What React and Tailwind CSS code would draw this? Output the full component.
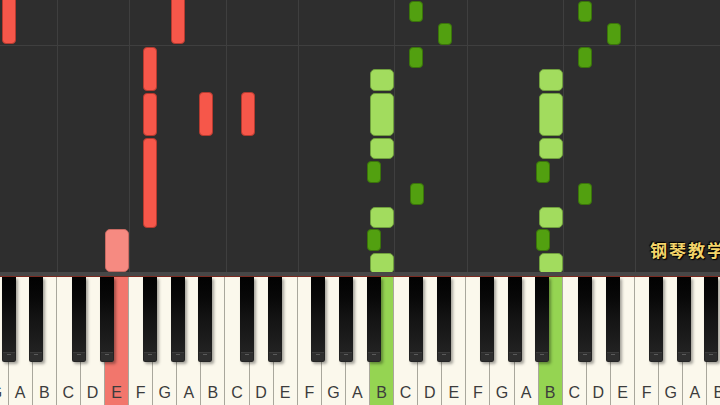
import React from 'react';

const KEY_W = 24.1;
const KEY_O = 8.6;
const LETTERS = ['A', 'B', 'C', 'D', 'E', 'F', 'G'];
const BLACK_SHIFT = { C: -2.4, D: 1.7, F: -3.7, G: 0.2, A: 3.6 };

const edge = (k) => KEY_O + k * KEY_W;
const letterOf = (k) => LETTERS[((k % 7) + 7) % 7];

const keyColors = {
    4: 'bg-[#f2766c]',
    15: 'bg-[#95d452]',
    22: 'bg-[#95d452]',
};

const noteStyles = {
    red: 'bg-[#f6574a] border border-[#b53a2f] rounded-[4px]',
    pink: 'bg-[#f68a81] border border-[#c86a62] rounded-[5px]',
    lg: 'bg-[#a2dc5e] border border-[#6f9e3d] rounded-[5px]',
    dg: 'bg-[#52a010] border border-[#3a740a] rounded-[4px]',
};

// x, top, bottom, width, type
const notes = [
    [2, -6, 44, 14, 'red'],
    [171, -6, 44, 14, 'red'],
    [143, 47, 91, 14, 'red'],
    [143, 93, 136, 14, 'red'],
    [143, 138, 228, 14, 'red'],
    [199, 92, 136, 14, 'red'],
    [241, 92, 136, 14, 'red'],
    [105, 229, 272, 24, 'pink'],

    [370, 69, 91, 24, 'lg'],
    [370, 93, 136, 24, 'lg'],
    [370, 138, 159, 24, 'lg'],
    [370, 207, 228, 24, 'lg'],
    [370, 253, 274, 24, 'lg'],
    [409, 1, 22, 14, 'dg'],
    [438, 23, 45, 14, 'dg'],
    [409, 47, 68, 14, 'dg'],
    [367, 161, 183, 14, 'dg'],
    [410, 183, 205, 14, 'dg'],
    [367, 229, 251, 14, 'dg'],

    [539, 69, 91, 24, 'lg'],
    [539, 93, 136, 24, 'lg'],
    [539, 138, 159, 24, 'lg'],
    [539, 207, 228, 24, 'lg'],
    [539, 253, 274, 24, 'lg'],
    [578, 1, 22, 14, 'dg'],
    [607, 23, 45, 14, 'dg'],
    [578, 47, 68, 14, 'dg'],
    [536, 161, 183, 14, 'dg'],
    [578, 183, 205, 14, 'dg'],
    [536, 229, 251, 14, 'dg'],
];

const whiteKeys = [];
for (let k = -1; k <= 29; k++) whiteKeys.push(k);

const gridLines = whiteKeys.filter((k) => ['C', 'F'].includes(letterOf(k)) && k > 0).map(edge);

const blackKeys = whiteKeys
    .filter((k) => BLACK_SHIFT[letterOf(k)] !== undefined)
    .map((k) => edge(k + 1) + BLACK_SHIFT[letterOf(k)] - 7);

const App = () => {
    return (
        <div className="w-[720px] h-[405px] overflow-hidden bg-[#2e2e2e] flex flex-col font-['Liberation_Sans',sans-serif]">
            {/* note lane */}
            <div className="relative h-[272px] shrink-0 overflow-hidden">
                {gridLines.map((x) => (
                    <div key={x} className="absolute top-0 bottom-0 w-px bg-[#3f3f3f]" style={{ left: Math.round(x) }} />
                ))}
                <div className="absolute left-0 right-0 top-[45px] h-px bg-[#3f3f3f]" />

                {notes.map(([x, top, bottom, w, type], i) => (
                    <div
                        key={i}
                        className={`absolute ${noteStyles[type]}`}
                        style={{ left: x, top, width: w, height: bottom - top }}
                    />
                ))}

                <div className="absolute left-[650px] top-[237px] whitespace-nowrap text-[17px] tracking-[2px] text-[#f3d46a] font-bold font-['Noto_Sans_CJK_SC',sans-serif] [text-shadow:0_0_2px_#000,1px_1px_1px_#000,-1px_-1px_1px_#000]">
                    钢琴教学
                </div>
            </div>

            <div className="h-[4px] shrink-0 bg-[#474747]" />
            <div className="h-px shrink-0 bg-[#7c2b22]" />

            {/* keyboard */}
            <div className="relative flex-1 bg-[#fbf8ec]">
                <div className="flex h-full ml-[-15.5px]">
                    {whiteKeys.map((k) => (
                        <div
                            key={k}
                            className={`w-[24.1px] shrink-0 h-full border-r border-[#a9a79c] flex items-end justify-center pb-[4px] text-[16px] leading-none text-[#3c3c3c] ${keyColors[k] || 'bg-[#fbf8ec]'}`}
                        >
                            {letterOf(k)}
                        </div>
                    ))}
                </div>

                {blackKeys.map((x, i) => (
                    <div
                        key={i}
                        className="absolute top-0 w-[14px] h-[85px] rounded-b-[2px] bg-linear-to-b from-[#020202] via-[#141414] to-[#262626] shadow-[2px_2px_3px_rgba(0,0,0,0.35)] flex flex-col justify-end"
                        style={{ left: x }}
                    >
                        <div className="h-[9px] mx-[1px] mb-[1px] rounded-b-[1px] bg-[#2e2e2e] border-t border-[#3c3c3c] flex justify-center">
                            <div className="w-[4px] h-px mt-[1px] bg-[#5a5a5a]" />
                        </div>
                    </div>
                ))}
            </div>
        </div>
    );
};

export default App;
